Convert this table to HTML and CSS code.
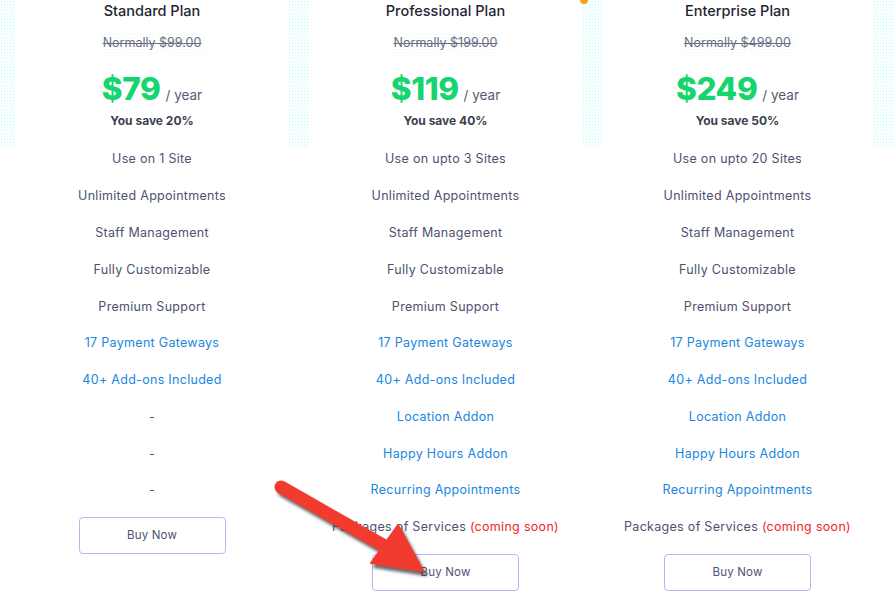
FILE: index.html
```html
<!DOCTYPE html>
<html lang="en">
<head>
<meta charset="utf-8">
<title>Pricing</title>
<link rel="stylesheet" href="styles.css">
</head>
<body>
<div class="page">
  <div class="accent"></div>
  <div class="plans">
    <div class="plan">
      <div class="plan-head">
        <h2 class="plan-title">Standard Plan</h2>
        <div class="old-price"><s>Normally $99.00</s></div>
        <div class="price"><span class="amount">$79</span><span class="per">/ year</span></div>
        <div class="save">You save 20%</div>
      </div>
      <ul class="features">
        <li>Use on 1 Site</li>
        <li>Unlimited Appointments</li>
        <li>Staff Management</li>
        <li>Fully Customizable</li>
        <li>Premium Support</li>
        <li class="blue">17 Payment Gateways</li>
        <li class="blue">40+ Add-ons Included</li>
        <li>-</li>
        <li>-</li>
        <li>-</li>
      </ul>
      <a class="buy" href="#">Buy Now</a>
    </div>
    <div class="plan">
      <div class="plan-head">
        <h2 class="plan-title">Professional Plan</h2>
        <div class="old-price"><s>Normally $199.00</s></div>
        <div class="price"><span class="amount">$119</span><span class="per">/ year</span></div>
        <div class="save">You save 40%</div>
      </div>
      <ul class="features">
        <li>Use on upto 3 Sites</li>
        <li>Unlimited Appointments</li>
        <li>Staff Management</li>
        <li>Fully Customizable</li>
        <li>Premium Support</li>
        <li class="blue">17 Payment Gateways</li>
        <li class="blue">40+ Add-ons Included</li>
        <li class="blue">Location Addon</li>
        <li class="blue">Happy Hours Addon</li>
        <li class="blue">Recurring Appointments</li>
        <li>Packages of Services <span class="soon">(coming soon)</span></li>
      </ul>
      <a class="buy" href="#">Buy Now</a>
    </div>
    <div class="plan">
      <div class="plan-head">
        <h2 class="plan-title">Enterprise Plan</h2>
        <div class="old-price"><s>Normally $499.00</s></div>
        <div class="price"><span class="amount">$249</span><span class="per">/ year</span></div>
        <div class="save">You save 50%</div>
      </div>
      <ul class="features">
        <li>Use on upto 20 Sites</li>
        <li>Unlimited Appointments</li>
        <li>Staff Management</li>
        <li>Fully Customizable</li>
        <li>Premium Support</li>
        <li class="blue">17 Payment Gateways</li>
        <li class="blue">40+ Add-ons Included</li>
        <li class="blue">Location Addon</li>
        <li class="blue">Happy Hours Addon</li>
        <li class="blue">Recurring Appointments</li>
        <li>Packages of Services <span class="soon">(coming soon)</span></li>
      </ul>
      <a class="buy" href="#">Buy Now</a>
    </div>
  </div>
  <svg class="arrow" width="894" height="592" viewBox="0 0 894 592" aria-hidden="true">
    <defs>
      <filter id="sh" x="-20%" y="-20%" width="140%" height="140%">
        <feGaussianBlur stdDeviation="1.6"/>
      </filter>
    </defs>
    <g transform="translate(3,4)" fill="#3a3a3a" stroke="#3a3a3a" opacity="0.75" filter="url(#sh)">
      <line x1="281" y1="487" x2="388" y2="548" stroke-width="13" stroke-linecap="round"/>
      <polygon points="398,525 423,571 371,563" stroke-width="2" stroke-linejoin="round"/>
    </g>
    <g fill="#f23a2e" stroke="#f23a2e">
      <line x1="281" y1="487" x2="388" y2="548" stroke-width="13" stroke-linecap="round"/>
      <polygon points="398,525 423,571 371,563" stroke-width="2" stroke-linejoin="round"/>
    </g>
  </svg>
</div>
</body>
</html>
```

FILE: styles.css
```css
* { box-sizing: border-box; }
html, body { margin: 0; padding: 0; background: #fff; }
body {
  font-family: "Inter", "Open Sans", sans-serif;
  color: #4d5270;
}
.page {
  position: relative;
  width: 894px;
  height: 592px;
  overflow: hidden;
  background:
    linear-gradient(#fff, #fff) 0 147px / 100% 100% no-repeat,
    radial-gradient(circle, #cdf9fc 0.8px, transparent 1px) 0 0 / 3px 3px,
    #f8ffff;
}
.accent {
  position: absolute;
  left: 580px;
  top: 0;
  width: 8px;
  height: 4px;
  background: #f6a21e;
  border-radius: 0 0 4px 4px;
}
.plans {
  display: grid;
  grid-template-columns: 274px 273px 271px;
  column-gap: 20px;
  padding-left: 15px;
}
.plan {
  display: flex;
  flex-direction: column;
  align-items: center;
  background: #fff;
}
.plan-head {
  width: 100%;
  height: 147px;
  display: flex;
  flex-direction: column;
  align-items: center;
  text-align: center;
}
.plan-title {
  margin: 0;
  font-size: 14.5px;
  font-weight: 500;
  line-height: 22px;
  color: #1f2633;
}
.old-price {
  margin-top: 11px;
  font-size: 12.5px;
  line-height: 20px;
  color: #6b6d82;
  padding: 0 3px;
  background: radial-gradient(circle, #dcfafd 0.8px, transparent 1px) 0 0 / 3px 3px;
}
.old-price s { text-decoration-thickness: 1px; }
.price {
  margin-top: 17px;
  display: flex;
  align-items: baseline;
  gap: 5px;
  height: 38px;
  line-height: 38px;
}
.amount {
  font-size: 31.5px;
  font-weight: 800;
  color: #16d46e;
  letter-spacing: -0.4px;
}
.per {
  font-size: 13.5px;
  color: #555a72;
}
.save {
  margin-top: 4px;
  font-size: 12px;
  font-weight: 700;
  line-height: 18px;
  color: #3b3f4e;
}
.features {
  list-style: none;
  margin: -6px 0 0;
  padding: 0;
  width: 100%;
  text-align: center;
}
.features li {
  font-size: 12.5px;
  letter-spacing: 0.3px;
  line-height: 22px;
  padding: 7.4px 0;
  color: #4d5270;
  white-space: nowrap;
}
.features li.blue { color: #1a86e0; }
.soon { color: #f2262c; }
.buy {
  margin-top: 8px;
  width: 147px;
  height: 37px;
  display: flex;
  align-items: center;
  justify-content: center;
  border: 1px solid #b8b6f6;
  border-radius: 4px;
  font-size: 11.5px;
  letter-spacing: 0.2px;
  color: #4d5270;
  text-decoration: none;
}
.arrow {
  position: absolute;
  left: 0;
  top: 0;
  pointer-events: none;
}
```
